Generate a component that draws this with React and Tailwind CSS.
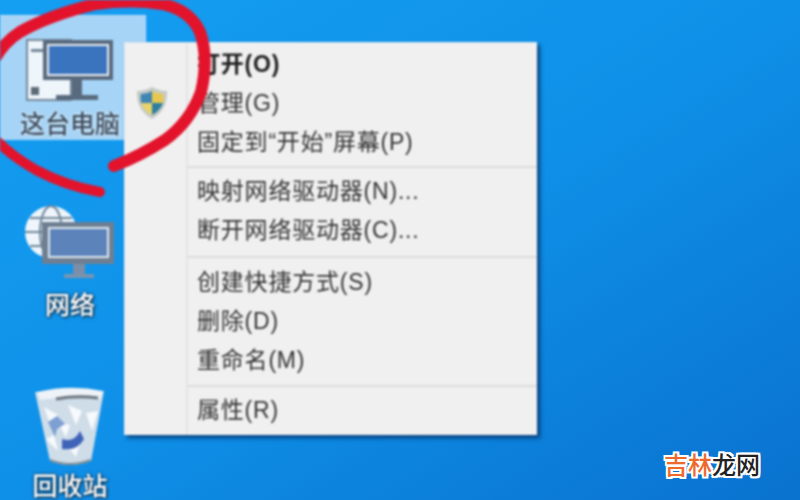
function Row({ children, bold }) {
  return (
    <div className={`h-[39px] pl-[72px] flex items-center whitespace-nowrap text-[23px] tracking-[0.8px] ${bold ? 'font-bold text-[#1e1e1e]' : 'text-[#333]'}`}>
      {children}
    </div>
  );
}

function Sep({ className }) {
  return (
    <div className={`flex items-center pl-[62px] ${className}`}>
      <div className="h-[2px] w-full bg-[#dcdcdc]" />
    </div>
  );
}

function DesktopIcon({ className, labelClass, label, children }) {
  return (
    <div className={`absolute flex flex-col items-center ${className}`}>
      {children}
      <div className={`text-[25px] leading-[26px] font-medium whitespace-nowrap ${labelClass}`}>{label}</div>
    </div>
  );
}

function ThisPcIcon() {
  return (
    <svg width="88" height="70" viewBox="0 0 88 70">
      <rect x="1" y="3" width="44" height="60" fill="#eef5fb" stroke="#76879a" strokeWidth="2" />
      <rect x="5" y="12" width="28" height="3" fill="#76879a" />
      <rect x="5" y="50" width="8" height="8" fill="#5d6b78" />
      <rect x="17" y="3" width="70" height="40" fill="#586a7d" />
      <rect x="21" y="7" width="62" height="32" fill="#e8eef4" />
      <rect x="23" y="9" width="58" height="28" fill="#3b74be" />
      <rect x="46" y="43" width="10" height="16" fill="#586a7d" />
      <rect x="30" y="58" width="42" height="5" fill="#586a7d" />
    </svg>
  );
}

function NetworkIcon() {
  return (
    <svg width="92" height="82" viewBox="0 0 92 82">
      <circle cx="27" cy="28" r="26" fill="#eef5fb" />
      <g fill="none" stroke="#6f8598" strokeWidth="2">
        <ellipse cx="27" cy="28" rx="11" ry="26" />
        <path d="M1 28h52M6 14h42M6 42h42" />
      </g>
      <rect x="18" y="18" width="72" height="42" fill="#6f7f92" />
      <rect x="24" y="23" width="61" height="31" fill="#dfe8f0" />
      <rect x="26" y="25" width="57" height="27" fill="#5d83bb" />
      <rect x="49" y="60" width="12" height="11" fill="#7b8fa6" />
      <rect x="40" y="70" width="30" height="4" fill="#7b94ae" />
    </svg>
  );
}

function BinIcon() {
  return (
    <svg width="72" height="80" viewBox="0 0 72 80">
      <path d="M1 5 L70 4 L57 74 Q36 82 16 74 Z" fill="#cfdde9" />
      <path d="M3 5 Q36 -3 69 4 L66 12 Q36 8 6 13 Z" fill="#eef3f7" />
      <path d="M22 12 Q42 8 64 11" fill="none" stroke="#6b757e" strokeWidth="3" />
      <path d="M10 20l14 8-6 14zM34 18l14 6-6 14zM52 26l12-2-6 20zM12 52l8-4 4 16zM34 60l12-4-4 14zM24 36l12 2-4 12z" fill="#f7fafc" />
      <path d="M14 35 l9 -6 l8 8 l-8 5 l-2 8z" fill="#7d9fd2" />
      <path d="M28 52 Q40 56 46 44 L50 52 Q44 64 28 62 Z" fill="#3f63b8" />
      <path d="M16 72 Q36 80 56 72 L57 74 Q36 82 16 74 Z" fill="#808a90" />
    </svg>
  );
}

function Shield() {
  return (
    <svg width="32" height="34" viewBox="0 0 32 34">
      <path d="M16 1 Q24 5 31 5 Q32 24 16 33 Q0 24 1 5 Q8 5 16 1Z" fill="#c6cbc6" />
      <path d="M16 5 V17 H5 Q4 9 5 8 Q11 8 16 5Z" fill="#3f86b4" />
      <path d="M16 5 Q21 8 27 8 Q28 12 27 17 H16Z" fill="#e7c84f" />
      <path d="M5 17 H16 V29 Q8 25 5 17Z" fill="#e9d36b" />
      <path d="M16 17 H27 Q24 25 16 29Z" fill="#2e7f9f" />
    </svg>
  );
}

export default function App() {
  return (
    <div className="relative w-[800px] h-[500px] overflow-hidden bg-gradient-to-br from-[#149ff2] via-[#0f90e8] to-[#0a72cf] font-['Liberation_Sans','Noto_Sans_CJK_SC',sans-serif]">
      <div className="absolute inset-0 blur-[0.8px]">
        {/* selected icon */}
        <div className="absolute left-0 top-[15px] w-[146px] h-[125px] bg-[#a6d4f6] border-r border-t border-dotted border-[#d8ecfb]" />

        <DesktopIcon className="left-[20px] top-[37px] w-[100px] gap-1" labelClass="text-[#3c4c5e] [text-shadow:0_0_3px_#fff]" label="这台电脑">
          <ThisPcIcon />
        </DesktopIcon>
        <DesktopIcon className="left-[20px] top-[204px] w-[100px] gap-1.5" labelClass="text-white [text-shadow:1px_1px_3px_#123,0_0_3px_#123]" label="网络">
          <NetworkIcon />
        </DesktopIcon>
        <DesktopIcon className="left-[20px] top-[387px] w-[100px] gap-[6px]" labelClass="text-white [text-shadow:1px_1px_3px_#123,0_0_3px_#123]" label="回收站">
          <BinIcon />
        </DesktopIcon>

        {/* context menu */}
        <div className="absolute left-[124px] top-[42px] w-[413px] h-[393px] pt-[2px] bg-[#f0f0f0] border-t border-l border-[#dbe7f0] shadow-[3px_3px_4px_rgba(5,40,90,0.75)]">
          <div className="absolute left-[61px] top-0 bottom-0 w-[2px] bg-[#e4e4e4]" />
          <div className="absolute left-[11px] top-[43px]"><Shield /></div>
          <Row bold>打开(O)</Row>
          <Row>管理(G)</Row>
          <Row>固定到“开始”屏幕(P)</Row>
          <Sep className="h-[10px]" />
          <Row>映射网络驱动器(N)...</Row>
          <Row>断开网络驱动器(C)...</Row>
          <Sep className="h-[13px]" />
          <Row>创建快捷方式(S)</Row>
          <Row>删除(D)</Row>
          <Row>重命名(M)</Row>
          <Sep className="h-[11px]" />
          <Row>属性(R)</Row>
        </div>

        {/* red marker circle */}
        <svg className="absolute left-0 top-0" width="230" height="210" viewBox="0 0 230 210" fill="none" stroke="#e3132c" strokeLinecap="round" strokeLinejoin="round">
          <path strokeWidth="12" d="M-6 60 Q4 42 20 32 Q50 15 96 4 Q130 -1 162 4 Q190 10 200 32 Q209 58 201 92 Q190 122 165 140 Q140 156 114 166" />
          <path strokeWidth="10" d="M-6 138 Q10 155 36 170 Q66 186 100 192" />
        </svg>
      </div>

      {/* watermark */}
      <div className="absolute left-[664px] top-[449px] text-[24px] leading-[30px] whitespace-nowrap font-['Noto_Sans_CJK_SC',sans-serif] font-medium [text-shadow:2px_0_0_#fff,-2px_0_0_#fff,0_2px_0_#fff,0_-2px_0_#fff,2px_2px_0_#fff,-2px_2px_0_#fff,2px_-2px_0_#fff,-2px_-2px_0_#fff]">
        <span className="text-[#ee6a2c]">吉林</span><span className="text-[#222]">龙网</span>
      </div>
    </div>
  );
}
